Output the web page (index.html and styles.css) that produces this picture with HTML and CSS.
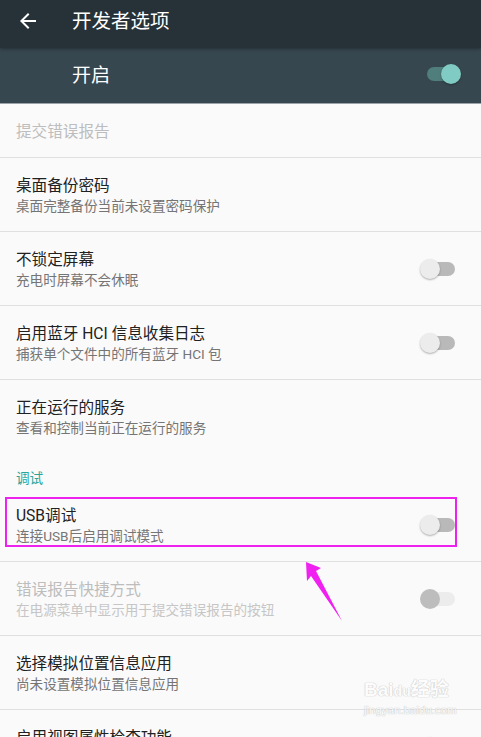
FILE: index.html
```html
<!DOCTYPE html>
<html lang="zh-CN">
<head>
  <meta charset="UTF-8" />
  <title>开发者选项</title>
  <meta name="viewport" content="width=device-width, initial-scale=1.0" />
  <link rel="stylesheet" href="styles.css">
</head>
<body>

  <div class="toolbar">
    <svg class="back" width="24" height="24" viewBox="0 0 24 24">
      <path d="M20 11H7.83l5.59-5.59L12 4l-8 8 8 8 1.41-1.41L7.83 13H20v-2z" fill="#fff"/>
    </svg>
    <span class="toolbar-title">开发者选项</span>
  </div>

  <div class="master">
    <span class="master-title">开启</span>
    <span class="switch on"><span class="thumb"></span></span>
  </div>

  <div class="list">
    <div class="row single disabled">
      <div class="text"><div class="title">提交错误报告</div></div>
    </div>

    <div class="row">
      <div class="text">
        <div class="title">桌面备份密码</div>
        <div class="summary">桌面完整备份当前未设置密码保护</div>
      </div>
    </div>

    <div class="row">
      <div class="text">
        <div class="title">不锁定屏幕</div>
        <div class="summary">充电时屏幕不会休眠</div>
      </div>
      <span class="switch"><span class="thumb"></span></span>
    </div>

    <div class="row">
      <div class="text">
        <div class="title">启用蓝牙 HCI 信息收集日志</div>
        <div class="summary">捕获单个文件中的所有蓝牙 HCI 包</div>
      </div>
      <span class="switch"><span class="thumb"></span></span>
    </div>

    <div class="row no-line">
      <div class="text">
        <div class="title">正在运行的服务</div>
        <div class="summary">查看和控制当前正在运行的服务</div>
      </div>
    </div>

    <div class="category">调试</div>

    <div class="row">
      <div class="highlight"></div>
      <div class="text">
        <div class="title">USB调试</div>
        <div class="summary">连接USB后启用调试模式</div>
      </div>
      <span class="switch"><span class="thumb"></span></span>
    </div>

    <div class="row disabled">
      <div class="text">
        <div class="title">错误报告快捷方式</div>
        <div class="summary">在电源菜单中显示用于提交错误报告的按钮</div>
      </div>
      <span class="switch off-disabled"><span class="thumb"></span></span>
    </div>

    <div class="row">
      <div class="text">
        <div class="title">选择模拟位置信息应用</div>
        <div class="summary">尚未设置模拟位置信息应用</div>
      </div>
    </div>

    <div class="row">
      <div class="text">
        <div class="title">启用视图属性检查功能</div>
        <div class="summary">&nbsp;</div>
      </div>
      <span class="switch"><span class="thumb"></span></span>
    </div>
  </div>

  <!-- 标注箭头 -->
  <svg class="pointer" width="481" height="737" viewBox="0 0 481 737">
    <polygon points="306,562 321,568 316,571 342,621 311,576 307,581" fill="#f020f0"/>
  </svg>

  <div class="watermark">
    <div class="wm-logo">Bai<span class="wm-du">du</span>经验</div>
    <div class="wm-url">jingyan.baidu.com</div>
  </div>

</body>
</html>
```

FILE: styles.css
```css
body {
  margin: 0;
  width: 481px;
  height: 737px;
  overflow: hidden;
  position: relative;
  background: #fafafa;
  font-family: Roboto, "Noto Sans CJK SC", sans-serif;
}

.toolbar {
  height: 48px;
  background: #263238;
  display: flex;
  align-items: center;
  box-shadow: 0 1px 3px rgba(0, 0, 0, 0.35);
  position: relative;
  z-index: 2;
}

.back {
  margin-left: 16px;
  margin-right: 32px;
  margin-top: -7px;
}

.toolbar-title {
  color: #fff;
  font-size: 19.5px;
  margin-top: -9px;
}

.master {
  height: 56px;
  background: #37474f;
  display: flex;
  align-items: center;
  justify-content: space-between;
  padding-left: 72px;
  padding-right: 26px;
  border-bottom: 1px solid #9aa3a8;
  box-sizing: border-box;
}

.master-title {
  color: #fff;
  font-size: 19px;
  margin-top: -4px;
}

/* 开关 */
.switch {
  position: relative;
  width: 30px;
  height: 14px;
  border-radius: 7px;
  background: #b9b9b9;
  flex-shrink: 0;
}

.switch .thumb {
  position: absolute;
  top: -3px;
  left: -5px;
  width: 20px;
  height: 20px;
  border-radius: 50%;
  background: #ececec;
  box-shadow: 0 1px 2px rgba(0, 0, 0, 0.3);
}

.switch.on {
  width: 28px;
  background: #4f7e7c;
  margin-top: -4px;
}

.switch.on .thumb {
  left: auto;
  right: -6px;
  background: #80cbc4;
}

.switch.off-disabled {
  background: #ececec;
}

.switch.off-disabled .thumb {
  background: #bdbdbd;
  box-shadow: none;
}

.list {
  display: flex;
  flex-direction: column;
}

.row {
  position: relative;
  height: 74px;
  padding: 2px 26px 0 16px;
  box-sizing: border-box;
  border-bottom: 1px solid #e0e0e0;
  display: flex;
  align-items: center;
  justify-content: space-between;
}

.row .switch {
  margin-top: -2px;
}

.row.single {
  height: 54px;
}

.row.no-line {
  border-bottom: none;
  height: 73px;
}

.title {
  font-size: 15.6px;
  line-height: 20px;
  color: #212121;
}

.summary {
  font-size: 13.6px;
  line-height: 20px;
  color: #757575;
}

.row.disabled .title {
  color: #bdbdbd;
}

.row.disabled .summary {
  color: #c6c6c6;
}

.category {
  height: 35px;
  padding-left: 16px;
  font-size: 13.6px;
  line-height: 20px;
  color: #26a69a;
  display: flex;
  align-items: flex-end;
  box-sizing: border-box;
}

.highlight {
  position: absolute;
  left: 5px;
  top: 9px;
  width: 452px;
  height: 50px;
  border: 2px solid #ee22ee;
  box-sizing: border-box;
}

.pointer {
  position: absolute;
  left: 0;
  top: 0;
  pointer-events: none;
}

.watermark {
  position: absolute;
  left: 364px;
  top: 679px;
  color: #fdfdfd;
  text-shadow: 0 0 1px #bbb, 0 0 1px #bbb;
  font-family: "Liberation Sans", "Noto Sans CJK SC", sans-serif;
  opacity: 0.85;
}

.wm-logo {
  font-size: 19px;
  font-weight: bold;
  line-height: 22px;
}

.wm-du {
  font-size: 14px;
}

.wm-url {
  font-size: 11.5px;
  line-height: 16px;
}
```
